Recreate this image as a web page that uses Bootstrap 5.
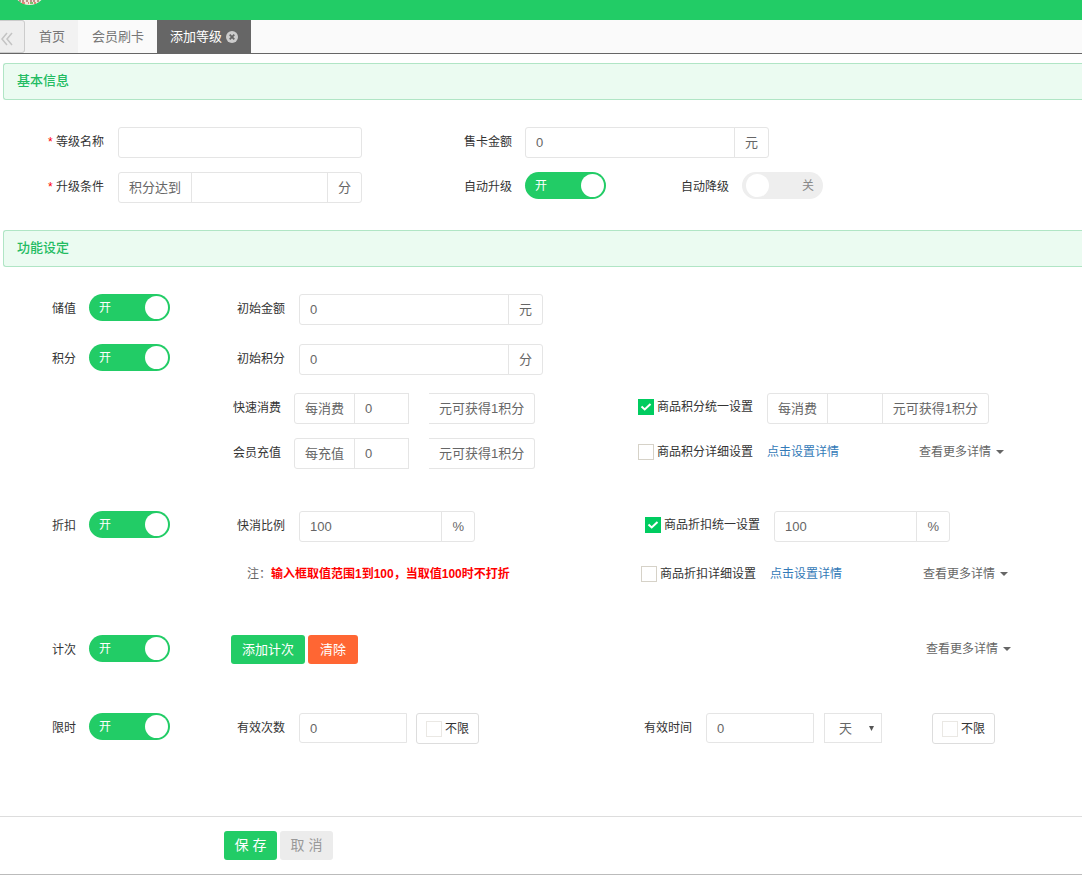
<!DOCTYPE html>
<html lang="zh-CN">
<head>
<meta charset="utf-8">
<meta name="viewport" content="width=device-width, initial-scale=1">
<title>添加等级</title>
<link rel="stylesheet" href="https://cdn.jsdelivr.net/npm/bootstrap@5.3.0/dist/css/bootstrap.min.css">
<style>
  :root { --brand: #22cc66; --line: #e5e5e5; --ink: #333; --soft: #666; }
  body { font-family: "Liberation Sans", "Noto Sans CJK SC", sans-serif; font-size: 12px; line-height: 20px; color: var(--ink); background: #fff; overflow-x: hidden; }
  .topbar { height: 20px; background: var(--brand); }
  .avatar { display: block; margin-left: 16px; }
  .tabbar { height: 34px; background: #fafafa; border-bottom: 1px solid #666; font-size: 13px; }
  .tabbar .tab-back { width: 25px; padding: 3px 0 0; border: 1px solid #ccc; border-width: 1px 1px 1px 0; border-radius: 0 3px 3px 0; background: #eee; text-align: left; }
  .tabbar .nav-link { color: #777; padding: 7px 13px 7px 14px; line-height: 20px; border-radius: 0; }
  .tabbar .tab-home { background: #f2f2f2; }
  .tabbar .nav-link.active { background: #666; color: #fff; padding-left: 13px; }
  .tab-close { border: 0; background: none; padding: 0; margin-left: 4px; line-height: 0; }
  .band { margin: 9px 0 27px 3px; padding: 8px 13px; height: 37px; font-size: 13px; line-height: 18px; color: #22bb62; background: #ebfbf1; border: 1px solid #b0e5c5; border-right: 0; border-radius: 3px 0 0 3px; }
  .basic { display: grid; grid-template-columns: 408fr 217fr 449fr; padding-left: 8px; row-gap: 14px; margin-bottom: 27px; }
  .feature { display: grid; grid-template-columns: 189fr 449fr 444fr; }
  .cell { display: flex; align-items: flex-start; min-width: 0; }
  .cap { flex: none; width: 96px; margin-right: 13px; padding-top: 5px; text-align: right; }
  .cap-wide { margin-right: 14px; }
  .cap-switch { width: 76px; }
  .cap-near { width: 92px; }
  .cap-period { width: 54px; margin-right: 14px; }
  .must { color: #f00; }
  .input-group { flex: none; flex-wrap: nowrap; }
  .w-amount { width: 244px; }
  .w-ratio { width: 176px; }
  .w-each { width: 115px; }
  .w-unify { width: 222px; }
  .form-control, .form-select, .input-group-text { height: 31px; padding: 4px 10px; font-size: 13px; line-height: 21px; color: var(--soft); border-color: var(--line); border-radius: 3px; background-color: #fff; min-height: 0; }
  .form-control.w-count { flex: none; width: 108px; height: 30px; border-radius: 3px 0 0 3px; }
  .each-input { border-radius: 0 !important; }
  .gain { border-left: 0; margin-left: 20px; border-radius: 0 3px 3px 0; }
  .form-select.unit { flex: none; width: 58px; height: 30px; margin-left: 10px; padding: 4px 14px; border-radius: 0; background-size: 5px 5px; background-position: right 7px center;
    background-image: url("data:image/svg+xml,%3Csvg xmlns='http://www.w3.org/2000/svg' viewBox='0 0 6 6'%3E%3Cpath d='M0 0h6L3 6z' fill='%23555'/%3E%3C/svg%3E"); }
  .toggle { position: relative; flex: none; display: flex; align-items: center; justify-content: space-between; width: 81px; height: 27px; padding: 0 2px 0 10px; border-radius: 14px; background: var(--brand); color: #fff; }
  .toggle-off { flex-direction: row-reverse; padding: 0 9px 0 4px; background: #eee; color: #888; }
  .toggle input { position: absolute; inset: 0; width: 100%; height: 100%; margin: 0; opacity: 0; }
  .knob { width: 23px; height: 23px; border-radius: 50%; background: #fff; }
  .form-check-input { flex: none; width: 16px; height: 16px; margin: 0 3px 0 0; border-color: #d6d2c8; border-radius: 0 !important; }
  .form-check-input:checked { background-color: #00cc60; border-color: #00cc60; background-size: 14px 14px;
    background-image: url("data:image/svg+xml,%3Csvg xmlns='http://www.w3.org/2000/svg' viewBox='0 0 14 14'%3E%3Cpath d='M2.5 6.5l3.2 3L11.5 4' fill='none' stroke='%23fff' stroke-width='2'/%3E%3C/svg%3E"); }
  .pick { display: flex; align-items: center; height: 20px; margin-right: 14px; white-space: nowrap; }
  .pick-field { margin-top: 4px; }
  .limit { display: flex; align-items: center; height: 31px; padding: 0 9px; margin-left: 9px; border: 1px solid #ddd; border-radius: 3px; }
  .limit .form-check-input { border-color: #eae8e4; }
  .limit-far { margin-left: 50px; }
  .detail { color: #337ab7; text-decoration: none; }
  .more { padding: 0; border: 0; background: none; color: var(--soft); line-height: 20px; }
  .more::after { border-width: 4px 4px 0; margin-left: 5px; vertical-align: 2px; }
  .inset-a { padding-left: 7px; }
  .inset-b { padding-left: 3px; }
  .ends-a { padding-right: 78px; }
  .ends-b { padding-right: 74px; }
  .ends-c { padding-right: 71px; }
  .note { color: var(--soft); padding-left: 58px; }
  .note strong { color: #f00; }
  .count-actions { padding-left: 42px; gap: 3px; }
  .gap-switch { margin-bottom: 19px; }
  .gap-points { margin-bottom: 18px; }
  .gap-line { margin-bottom: 14px; }
  .gap-block { margin-bottom: 42px; }
  .gap-count { margin-bottom: 49px; }
  .gap-note { margin-bottom: 22px; }
  .gap-detail { margin-bottom: 51px; }
  .btn { min-width: 50px; font-size: 13px; line-height: 19px; padding: 5px 11px; border: 0; border-radius: 3px; color: #fff; }
  .btn-brand, .btn-brand:hover { background: var(--brand); color: #fff; }
  .btn-clear, .btn-clear:hover { background: #ff6633; color: #fff; }
  .btn-quiet, .btn-quiet:hover { background: #ececec; color: #999; }
  .actions { display: flex; gap: 3px; margin-top: 72px; padding: 14px 0 14px 20.7%; border-top: 1px solid #ddd; border-bottom: 1px solid #bbb; }
  .actions .btn { font-size: 14px; padding: 5px 10px; min-width: 53px; }
</style>
</head>
<body>
<header class="topbar">
  <svg class="avatar" width="28" height="6" viewBox="0 0 28 6" aria-hidden="true">
    <circle cx="13.500" cy="-12" r="17" fill="#f4e6dc"/>
    <path d="M3 1h2M7 0v2M11 0v2M15 0v2M18 0v2M22 0v2" stroke="#a5756a" stroke-width="1.500"/>
    <path d="M6 3h3M12 3h1M18 3h2" stroke="#dc6a58" stroke-width="1.500"/>
    <path d="M14 3h3" stroke="#7fc06c" stroke-width="2"/>
  </svg>
</header>
<nav class="tabbar nav flex-nowrap">
  <button class="tab-back" type="button" aria-label="向左滚动">
    <svg width="14" height="14" viewBox="0 0 14 14" fill="none" stroke="#c4c4c4" stroke-width="1.500"><path d="M7 1L2 7l5 6M12 1L7 7l5 6"/></svg>
  </button>
  <a class="nav-link tab-home" href="#">首页</a>
  <a class="nav-link" href="#">会员刷卡</a>
  <div class="nav-link active d-flex align-items-center">添加等级<button class="tab-close" type="button" aria-label="关闭">
    <svg width="12" height="12" viewBox="0 0 12 12"><circle cx="6" cy="6" r="6" fill="#ccc"/><path d="M3.700 3.700l4.600 4.600M8.300 3.700l-4.600 4.600" stroke="#666" stroke-width="1.800"/></svg>
  </button></div>
</nav>

<form>
<h2 class="band">基本信息</h2>
<section class="basic">
  <div class="cell">
    <label class="cap cap-wide" for="levelName"><span class="must">*</span> 等级名称</label>
    <input class="form-control w-amount flex-grow-0" id="levelName" type="text">
  </div>
  <div class="cell" style="grid-column: span 2">
    <label class="cap" for="cardPrice">售卡金额</label>
    <div class="input-group w-amount"><input class="form-control" id="cardPrice" value="0"><span class="input-group-text">元</span></div>
  </div>
  <div class="cell">
    <label class="cap cap-wide" for="upgrade"><span class="must">*</span> 升级条件</label>
    <div class="input-group w-amount"><span class="input-group-text">积分达到</span><input class="form-control" id="upgrade"><span class="input-group-text">分</span></div>
  </div>
  <div class="cell">
    <label class="cap" for="autoUp">自动升级</label>
    <span class="toggle"><span>开</span><span class="knob"></span><input type="checkbox" role="switch" id="autoUp" checked></span>
  </div>
  <div class="cell">
    <label class="cap" for="autoDown">自动降级</label>
    <span class="toggle toggle-off"><span>关</span><span class="knob"></span><input type="checkbox" role="switch" id="autoDown"></span>
  </div>
</section>

<h2 class="band mt-0">功能设定</h2>
<section class="feature gap-switch">
  <div class="cell">
    <label class="cap cap-switch" for="store">储值</label>
    <span class="toggle"><span>开</span><span class="knob"></span><input type="checkbox" role="switch" id="store" checked></span>
  </div>
  <div class="cell">
    <label class="cap cap-wide" for="initMoney">初始金额</label>
    <div class="input-group w-amount"><input class="form-control" id="initMoney" value="0"><span class="input-group-text">元</span></div>
  </div>
</section>
<section class="feature gap-points">
  <div class="cell">
    <label class="cap cap-switch" for="points">积分</label>
    <span class="toggle"><span>开</span><span class="knob"></span><input type="checkbox" role="switch" id="points" checked></span>
  </div>
  <div class="cell">
    <label class="cap cap-wide" for="initPoints">初始积分</label>
    <div class="input-group w-amount"><input class="form-control" id="initPoints" value="0"><span class="input-group-text">分</span></div>
  </div>
</section>
<section class="feature gap-line">
  <div></div>
  <div class="cell">
    <label class="cap cap-near" for="quick">快速消费</label>
    <div class="input-group w-each"><span class="input-group-text">每消费</span><input class="form-control each-input" id="quick" value="0"></div>
    <span class="input-group-text gain">元可获得1积分</span>
  </div>
  <div class="cell">
    <div class="pick pick-field"><input class="form-check-input" type="checkbox" id="unifyPoints" checked><label for="unifyPoints">商品积分统一设置</label></div>
    <div class="input-group w-unify"><span class="input-group-text">每消费</span><input class="form-control" aria-label="每消费"><span class="input-group-text">元可获得1积分</span></div>
  </div>
</section>
<section class="feature gap-block">
  <div></div>
  <div class="cell">
    <label class="cap cap-near" for="recharge">会员充值</label>
    <div class="input-group w-each"><span class="input-group-text">每充值</span><input class="form-control each-input" id="recharge" value="0"></div>
    <span class="input-group-text gain">元可获得1积分</span>
  </div>
  <div class="cell ends-a pt-1">
    <div class="pick"><input class="form-check-input" type="checkbox" id="detailPoints"><label for="detailPoints">商品积分详细设置</label></div>
    <a class="detail" href="#">点击设置详情</a>
    <button class="more dropdown-toggle ms-auto" type="button">查看更多详情</button>
  </div>
</section>

<section class="feature gap-note">
  <div class="cell">
    <label class="cap cap-switch" for="discount">折扣</label>
    <span class="toggle"><span>开</span><span class="knob"></span><input type="checkbox" role="switch" id="discount" checked></span>
  </div>
  <div class="cell">
    <label class="cap cap-wide" for="ratio">快消比例</label>
    <div class="input-group w-ratio"><input class="form-control" id="ratio" value="100"><span class="input-group-text">%</span></div>
  </div>
  <div class="cell inset-a">
    <div class="pick pick-field"><input class="form-check-input" type="checkbox" id="unifyDiscount" checked><label for="unifyDiscount">商品折扣统一设置</label></div>
    <div class="input-group w-ratio"><input class="form-control" aria-label="统一折扣" value="100"><span class="input-group-text">%</span></div>
  </div>
</section>
<section class="feature gap-detail">
  <div></div>
  <div class="note">注：<strong>输入框取值范围1到100，当取值100时不打折</strong></div>
  <div class="cell ends-b inset-b">
    <div class="pick"><input class="form-check-input" type="checkbox" id="detailDiscount"><label for="detailDiscount">商品折扣详细设置</label></div>
    <a class="detail" href="#">点击设置详情</a>
    <button class="more dropdown-toggle ms-auto" type="button">查看更多详情</button>
  </div>
</section>

<section class="feature gap-count">
  <div class="cell">
    <label class="cap cap-switch" for="count">计次</label>
    <span class="toggle"><span>开</span><span class="knob"></span><input type="checkbox" role="switch" id="count" checked></span>
  </div>
  <div class="cell count-actions">
    <button class="btn btn-brand" type="button">添加计次</button>
    <button class="btn btn-clear" type="button">清除</button>
  </div>
  <div class="cell ends-c pt-1"><button class="more dropdown-toggle ms-auto" type="button">查看更多详情</button></div>
</section>

<section class="feature">
  <div class="cell">
    <label class="cap cap-switch" for="limitTime">限时</label>
    <span class="toggle"><span>开</span><span class="knob"></span><input type="checkbox" role="switch" id="limitTime" checked></span>
  </div>
  <div class="cell">
    <label class="cap cap-wide" for="times">有效次数</label>
    <input class="form-control w-count" id="times" value="0">
    <div class="limit"><input class="form-check-input" type="checkbox" id="noTimes"><label for="noTimes">不限</label></div>
  </div>
  <div class="cell">
    <label class="cap cap-period" for="period">有效时间</label>
    <input class="form-control w-count" id="period" value="0">
    <select class="form-select unit" aria-label="单位"><option>天</option><option>月</option><option>年</option></select>
    <div class="limit limit-far"><input class="form-check-input" type="checkbox" id="noPeriod"><label for="noPeriod">不限</label></div>
  </div>
</section>

<footer class="actions">
  <button class="btn btn-brand" type="submit">保 存</button>
  <button class="btn btn-quiet" type="button">取 消</button>
</footer>
</form>
<script src="https://cdn.jsdelivr.net/npm/bootstrap@5.3.0/dist/js/bootstrap.bundle.min.js"></script>
</body>
</html>
